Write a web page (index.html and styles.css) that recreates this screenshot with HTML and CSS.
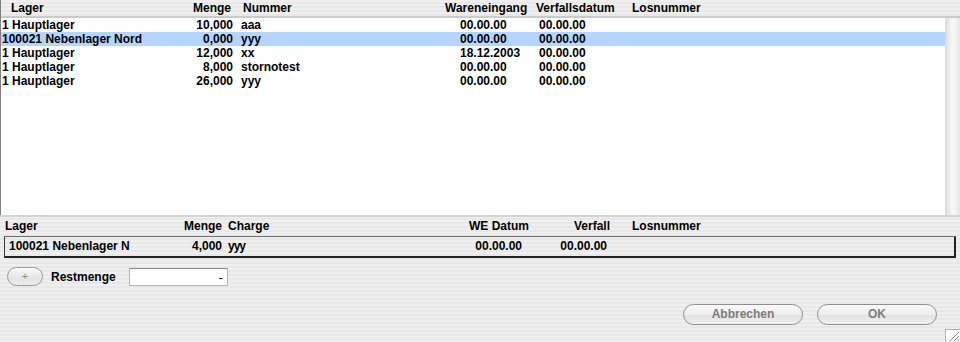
FILE: index.html
```html
<!DOCTYPE html>
<html>
<head lang="de">
  <meta charset="UTF-8">
  <title>Lager</title>
  <link rel="stylesheet" href="styles.css">
</head>
<body>
<div class="top">
  <div class="grid head">
    <span class="c1">Lager</span>
    <span class="c2">Menge</span>
    <span class="c3">Nummer</span>
    <span class="c4">Wareneingang</span>
    <span class="c5">Verfallsdatum</span>
    <span class="c6">Losnummer</span>
  </div>
  <div class="listwrap">
    <div class="list">
      <div class="grid row">
        <span class="c1">1 Hauptlager</span><span class="c2">10,000</span><span class="c3">aaa</span>
        <span class="c4">00.00.00</span><span class="c5">00.00.00</span><span class="c6"></span>
      </div>
      <div class="grid row sel">
        <span class="c1">100021 Nebenlager Nord</span><span class="c2">0,000</span><span class="c3">yyy</span>
        <span class="c4">00.00.00</span><span class="c5">00.00.00</span><span class="c6"></span>
      </div>
      <div class="grid row">
        <span class="c1">1 Hauptlager</span><span class="c2">12,000</span><span class="c3">xx</span>
        <span class="c4">18.12.2003</span><span class="c5">00.00.00</span><span class="c6"></span>
      </div>
      <div class="grid row">
        <span class="c1">1 Hauptlager</span><span class="c2">8,000</span><span class="c3">stornotest</span>
        <span class="c4">00.00.00</span><span class="c5">00.00.00</span><span class="c6"></span>
      </div>
      <div class="grid row">
        <span class="c1">1 Hauptlager</span><span class="c2">26,000</span><span class="c3">yyy</span>
        <span class="c4">00.00.00</span><span class="c5">00.00.00</span><span class="c6"></span>
      </div>
    </div>
    <div class="scroll"></div>
  </div>
</div>

<div class="bottom">
  <div class="grid2 head2">
    <span class="d1">Lager</span>
    <span class="d2">Menge</span>
    <span class="d3">Charge</span>
    <span class="d4">WE Datum</span>
    <span class="d5">Verfall</span>
    <span class="d6">Losnummer</span>
  </div>
  <div class="grid3 box">
    <span class="d1">100021 Nebenlager N</span>
    <span class="d2">4,000</span>
    <span class="d3">yyy</span>
    <span class="d4">00.00.00</span>
    <span class="d5">00.00.00</span>
    <span class="d6"></span>
  </div>

  <div class="controls">
    <span class="plus">+</span>
    <span class="label">Restmenge</span>
    <span class="field">-</span>
  </div>

  <div class="buttons">
    <span class="btn">Abbrechen</span>
    <span class="btn">OK</span>
  </div>

  <div class="gripline">
    <svg class="grip" width="15" height="12" viewBox="0 0 15 12">
      <rect x="0.5" y="0.5" width="15" height="12" fill="#fff" stroke="#b0b0b0"/>
      <path d="M5 12 L14 3 M9 12 L14 7 M12.5 12 L14 10.5" stroke="#8a8a8a" stroke-width="1"/>
    </svg>
  </div>
</div>
</body>
</html>
```

FILE: styles.css
```css
* {
  margin: 0;
  padding: 0;
  box-sizing: border-box;
}

body {
  width: 960px;
  height: 342px;
  overflow: hidden;
  font-family: "Liberation Sans", Arial, sans-serif;
  font-size: 12px;
  font-weight: bold;
  color: #000;
  background: repeating-linear-gradient(#efefef 0 2px, #e8e8e8 2px 4px);
}

/* upper list */
.top {
  border-left: 1px solid #7f7f7f;
}

.grid {
  display: grid;
  grid-template-columns: 189px 45px 210px 90px 95px 1fr;
  white-space: nowrap;
}

.head {
  height: 18px;
  line-height: 16px;
  border-bottom: 2px solid #cbcbcb;
}

.head .c1 { padding-left: 10px; }
.head .c2 { text-align: right; padding-right: 4px; }
.head .c3 { padding-left: 8px; }
.head .c4 { padding-left: 0; }
.head .c5 { padding-left: 1px; }
.head .c6 { padding-left: 2px; }

.listwrap {
  display: flex;
  height: 197px;
}

.list {
  flex: 1;
  background: #fff;
}

.row {
  height: 14px;
  line-height: 14px;
}

.row.sel {
  background: #b5d5ff;
}

.row .c1 { padding-left: 1px; }
.row .c2 { text-align: right; padding-right: 2px; }
.row .c3 { padding-left: 6px; }
.row .c4 { padding-left: 15px; }
.row .c5 { padding-left: 4px; }

.scroll {
  width: 15px;
  background: linear-gradient(to right, #d9d9d9, #f4f4f4 40%, #f7f7f7 60%, #e6e6e6);
}

/* lower part */
.bottom {
  border-top: 2px solid #d4d4d4;
}

.grid2, .grid3 {
  display: grid;
  white-space: nowrap;
}

.grid2 {
  grid-template-columns: 176px 48px 196px 110px 82px 1fr;
  height: 19px;
  line-height: 19px;
}

.head2 .d1 { padding-left: 5px; }
.head2 .d2 { text-align: right; padding-right: 2px; }
.head2 .d3 { padding-left: 4px; }
.head2 .d4 { text-align: right; padding-right: 1px; }
.head2 .d5 { text-align: right; padding-right: 2px; }
.head2 .d6 { padding-left: 20px; }

.grid3 {
  grid-template-columns: 171px 48px 196px 110px 82px 1fr;
}

.box {
  margin-left: 4px;
  width: 952px;
  height: 22px;
  line-height: 19px;
  border-top: 1px solid #6e6e6e;
  border-left: 1px solid #3a3a3a;
  border-right: 2px solid #222;
  border-bottom: 2px solid #222;
}

.box .d1 { padding-left: 4px; }
.box .d2 { text-align: right; padding-right: 2px; }
.box .d3 { padding-left: 4px; letter-spacing: -1px; }
.box .d4 { text-align: right; padding-right: 8px; }
.box .d5 { text-align: right; padding-right: 5px; }

.controls {
  display: flex;
  align-items: center;
  height: 19px;
  margin-top: 9px;
  padding-left: 7px;
}

.plus {
  width: 36px;
  height: 19px;
  border: 1px solid #9a9a9a;
  border-radius: 10px;
  background: linear-gradient(#fbfbfb, #e4e4e4 60%, #ececec);
  color: #8a8a8a;
  font-weight: normal;
  font-size: 11px;
  line-height: 16px;
  text-align: center;
}

.label {
  margin-left: 8px;
}

.field {
  width: 99px;
  height: 18px;
  margin-left: 13px;
  background: #fff;
  border: 1px solid #b4b4b4;
  border-top-color: #8c8c8c;
  text-align: right;
  padding-right: 4px;
  font-weight: normal;
  line-height: 18px;
}

.buttons {
  display: flex;
  justify-content: flex-end;
  gap: 14px;
  margin-top: 18px;
  padding-right: 23px;
}

.btn {
  width: 120px;
  height: 21px;
  border: 1px solid #8f8f8f;
  border-radius: 11px;
  background: linear-gradient(#fafafa, #ededed 50%, #e2e2e2 55%, #f0f0f0);
  color: #7d7d7d;
  text-align: center;
  line-height: 19px;
}

.gripline {
  display: flex;
  justify-content: flex-end;
  margin-top: 4px;
}

.grip {
  display: block;
}
```
